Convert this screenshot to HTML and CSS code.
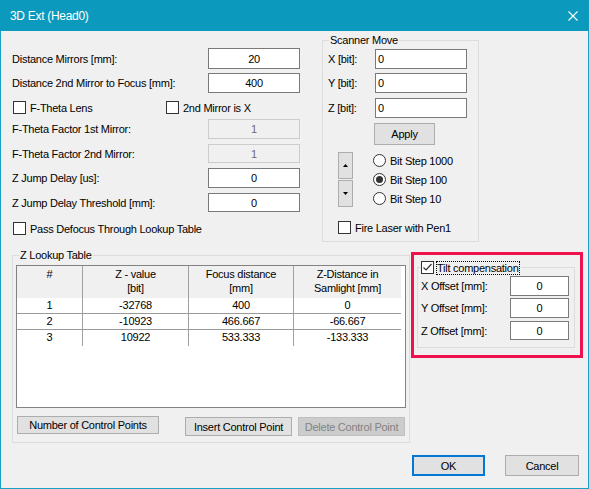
FILE: index.html
```html
<!DOCTYPE html>
<html lang="en">
<head>
<meta charset="utf-8">
<title>3D Ext (Head0)</title>
<link rel="stylesheet" href="styles.css">
</head>
<body>
<div class="window">
  <div class="titlebar">
    <span class="title">3D Ext (Head0)</span>
    <svg class="close" width="10" height="10" viewBox="0 0 10 10"><path d="M0.5 0.5L9.5 9.5M9.5 0.5L0.5 9.5" stroke="#fff" stroke-width="1.1" fill="none"/></svg>
  </div>
  <div class="client">
    <div class="top">
      <div class="leftcol">
        <div class="frow r1"><span class="lbl">Distance Mirrors [mm]:</span><span class="edit">20</span></div>
        <div class="frow r2"><span class="lbl">Distance 2nd Mirror to Focus [mm]:</span><span class="edit">400</span></div>
        <div class="chkrow r3">
          <span class="chk w153"><span class="box"></span><span>F-Theta Lens</span></span>
          <span class="chk"><span class="box"></span><span>2nd Mirror is X</span></span>
        </div>
        <div class="frow r4"><span class="lbl">F-Theta Factor 1st Mirror:</span><span class="edit disabled">1</span></div>
        <div class="frow r5"><span class="lbl">F-Theta Factor 2nd Mirror:</span><span class="edit disabled">1</span></div>
        <div class="frow r6"><span class="lbl">Z Jump Delay [us]:</span><span class="edit">0</span></div>
        <div class="frow r7"><span class="lbl">Z Jump Delay Threshold [mm]:</span><span class="edit">0</span></div>
        <div class="chkrow r8"><span class="chk"><span class="box"></span><span>Pass Defocus Through Lookup Table</span></span></div>
      </div>
      <div class="group scanner">
        <span class="gtitle">Scanner Move</span>
        <div class="srow"><span class="slbl">X [bit]:</span><span class="edit left">0</span></div>
        <div class="srow y"><span class="slbl">Y [bit]:</span><span class="edit left">0</span></div>
        <div class="srow z"><span class="slbl">Z [bit]:</span><span class="edit left">0</span></div>
        <div class="btn apply">Apply</div>
        <div class="steps">
          <div class="spin">
            <div class="btn spinbtn"><svg width="5" height="3" viewBox="0 0 5 3"><path d="M2.5 0L5 3H0Z" fill="#000"/></svg></div>
            <div class="btn spinbtn"><svg width="5" height="3" viewBox="0 0 5 3"><path d="M0 0H5L2.5 3Z" fill="#000"/></svg></div>
          </div>
          <div class="radios">
            <div class="radio"><span class="circle"></span><span>Bit Step 1000</span></div>
            <div class="radio"><span class="circle on"></span><span>Bit Step 100</span></div>
            <div class="radio"><span class="circle"></span><span>Bit Step 10</span></div>
          </div>
        </div>
        <div class="chk fire"><span class="box"></span><span>Fire Laser with Pen1</span></div>
      </div>
    </div>
    <div class="lower">
      <div class="group zlut">
        <span class="gtitle">Z Lookup Table</span>
        <div class="list">
          <div class="lhead">
            <div class="hc c1">#</div>
            <div class="hc c2">Z - value<br>[bit]</div>
            <div class="hc c3">Focus distance<br>[mm]</div>
            <div class="hc c4">Z-Distance in<br>Samlight [mm]</div>
          </div>
          <div class="lrow sep"><div class="dc c1">1</div><div class="dc c2">-32768</div><div class="dc c3">400</div><div class="dc c4">0</div></div>
          <div class="lrow sep"><div class="dc c1">2</div><div class="dc c2">-10923</div><div class="dc c3">466.667</div><div class="dc c4">-66.667</div></div>
          <div class="lrow"><div class="dc c1">3</div><div class="dc c2">10922</div><div class="dc c3">533.333</div><div class="dc c4">-133.333</div></div>
        </div>
        <div class="zbtns">
          <div class="btn ncp">Number of Control Points</div>
          <div class="btn icp">Insert Control Point</div>
          <div class="btn dcp disabledbtn">Delete Control Point</div>
        </div>
      </div>
      <div class="hl">
        <div class="group tilt">
          <span class="ttitle"><span class="box tick"><svg width="11" height="11" viewBox="0 0 11 11"><path d="M1.5 5.5L4 8L9.5 2" stroke="#333" stroke-width="1.2" fill="none"/></svg></span><span class="focus">Tilt compensation</span></span>
          <div class="trow"><span>X Offset [mm]:</span><span class="edit tedit">0</span></div>
          <div class="trow ty"><span>Y Offset [mm]:</span><span class="edit tedit">0</span></div>
          <div class="trow tz"><span>Z Offset [mm]:</span><span class="edit tedit">0</span></div>
        </div>
      </div>
    </div>
    <div class="dlgbtns">
      <div class="btn ok">OK</div>
      <div class="btn cancel">Cancel</div>
    </div>
  </div>
</div>
</body>
</html>
```
FILE: styles.css
```css
html, body { margin: 0; padding: 0; }
body { width: 589px; height: 489px; overflow: hidden; background: #f0f0f0; }

.window {
  width: 589px; height: 489px; box-sizing: border-box;
  border: 1px solid #18a1c6; border-top: none;
  background: #f0f0f0;
  display: flex; flex-direction: column;
  font-family: "Liberation Sans", Arial, sans-serif;
  font-size: 11px; letter-spacing: -0.25px; color: #000;
}
.titlebar {
  flex: none; height: 31px; margin: 0 -1px;
  background: #0b9abd; color: #fff;
  display: flex; align-items: center; justify-content: space-between;
  padding: 0 11px 0 10px;
}
.title { font-size: 12px; letter-spacing: -0.3px; }
.close { display: block; }

.client { flex: 1; display: flex; flex-direction: column; }
.top { display: flex; align-items: flex-start; }

.leftcol { margin-left: 11px; width: 288px; display: flex; flex-direction: column; }
.frow { display: flex; align-items: center; justify-content: space-between; }
.r1 { margin-top: 17px; height: 21px; }
.r2 { margin-top: 4px; height: 20px; }
.r3 { margin-top: 8px; height: 13px; }
.r4 { margin-top: 5px; height: 20px; }
.r5 { margin-top: 5px; height: 19px; }
.r6 { margin-top: 5px; height: 20px; }
.r7 { margin-top: 5px; height: 19px; }
.r8 { margin-top: 10px; height: 13px; }

.edit {
  box-sizing: border-box; width: 92px; height: 100%;
  background: #fff; border: 1px solid #7a7a7a;
  display: flex; align-items: center; justify-content: center;
}
.edit.disabled { background: #f0f0f0; border-color: #cccccc; color: #6d6d6d; }
.edit.left { justify-content: flex-start; padding-left: 2px; }

.chkrow { display: flex; align-items: center; }
.chk { display: flex; align-items: center; height: 13px; }
.w153 { width: 153px; }
.box {
  box-sizing: border-box; width: 13px; height: 13px; flex: none;
  border: 1px solid #333; background: #fff;
  margin-left: 1px; margin-right: 4px;
}

.group { position: relative; box-sizing: border-box; border: 1px solid #dcdcdc; }
.gtitle {
  position: absolute; top: -7px; left: 6px; padding: 0 1px;
  background: #f0f0f0; line-height: 13px; height: 13px;
}

.scanner {
  margin-left: 22px; margin-top: 9px; width: 157px; height: 202px;
  padding: 8px 0 0 5px; display: flex; flex-direction: column;
}
.srow { display: flex; align-items: center; height: 20px; }
.srow.y { margin-top: 4px; }
.srow.z { margin-top: 5px; }
.slbl { width: 47px; }

.btn {
  box-sizing: border-box; background: #e1e1e1; border: 1px solid #adadad;
  display: flex; align-items: center; justify-content: center;
}
.apply { margin-top: 5px; margin-left: 46px; width: 61px; height: 22px; }
.steps { display: flex; margin-top: 7px; }
.spin { margin-left: 10px; display: flex; flex-direction: column; gap: 1px; }
.spinbtn { width: 15px; height: 27px; }
.spinbtn svg { display: block; }
.radios { margin-left: 20px; margin-top: -1px; display: flex; flex-direction: column; }
.radio { display: flex; align-items: center; height: 19px; }
.circle {
  box-sizing: border-box; width: 13px; height: 13px; flex: none;
  border: 1px solid #333; border-radius: 50%; background: #fff;
  margin-right: 4px; display: flex; align-items: center; justify-content: center;
}
.circle.on::after { content: ""; width: 7px; height: 7px; border-radius: 50%; background: #333; }
.fire { margin-top: 13px; margin-left: 9px; }

.lower { display: flex; align-items: flex-start; margin-top: 10px; }
.zlut { margin-left: 11px; margin-top: 3px; width: 398px; height: 188px; }
.list {
  margin-left: 3px; margin-top: 9px; width: 390px; height: 143px;
  box-sizing: border-box; border: 1px solid #828282; background: #fff;
}
.lhead { display: flex; height: 32px; background: #f0f0f0; width: 384px; }
.hc { box-sizing: border-box; text-align: center; padding-top: 1px; line-height: 14px; }
.lrow { display: flex; height: 16px; width: 384px; box-sizing: border-box; }
.lrow.sep { border-bottom: 1px solid #9a9a9a; }
.dc { box-sizing: border-box; text-align: center; line-height: 15px; }
.c1 { width: 66px; border-right: 1px solid #a0a0a0; }
.c2 { width: 106px; border-right: 1px solid #a0a0a0; }
.c3 { width: 105px; border-right: 1px solid #a0a0a0; }
.c4 { width: 107px; }

.zbtns { display: flex; align-items: flex-start; margin-top: 8px; }
.ncp { margin-left: 4px; width: 142px; height: 18px; }
.icp { margin-left: 26px; margin-top: 1px; width: 107px; height: 19px; }
.dcp { margin-left: 6px; margin-top: 1px; width: 107px; height: 19px; }
.disabledbtn { background: #cccccc; border-color: #bfbfbf; color: #838383; }

.hl {
  margin-left: 1px; width: 172px; height: 106px;
  box-sizing: border-box; border: 3px solid #f0124e;
}
.tilt {
  margin-left: 3px; margin-top: 12px; width: 158px; height: 81px;
  padding: 8px 0 0 3px; display: flex; flex-direction: column;
}
.ttitle {
  position: absolute; top: -7px; left: 2px; height: 13px;
  display: flex; align-items: center; background: #f0f0f0; padding-right: 2px;
}
.box.tick { margin-right: 3px; display: flex; align-items: center; justify-content: center; }
.box.tick svg { display: block; }
.focus { outline: 1px dotted #000; line-height: 12px; height: 12px; }
.trow { display: flex; align-items: center; justify-content: space-between; height: 20px; width: 148px; }
.trow.ty { margin-top: 2px; }
.trow.tz { margin-top: 3px; height: 19px; }
.tedit { width: 59px; }

.dlgbtns { display: flex; justify-content: flex-end; gap: 20px; margin-top: 12px; padding-right: 9px; }
.ok { width: 73px; height: 21px; border: 2px solid #0078d7; }
.cancel { width: 74px; height: 21px; }
```
